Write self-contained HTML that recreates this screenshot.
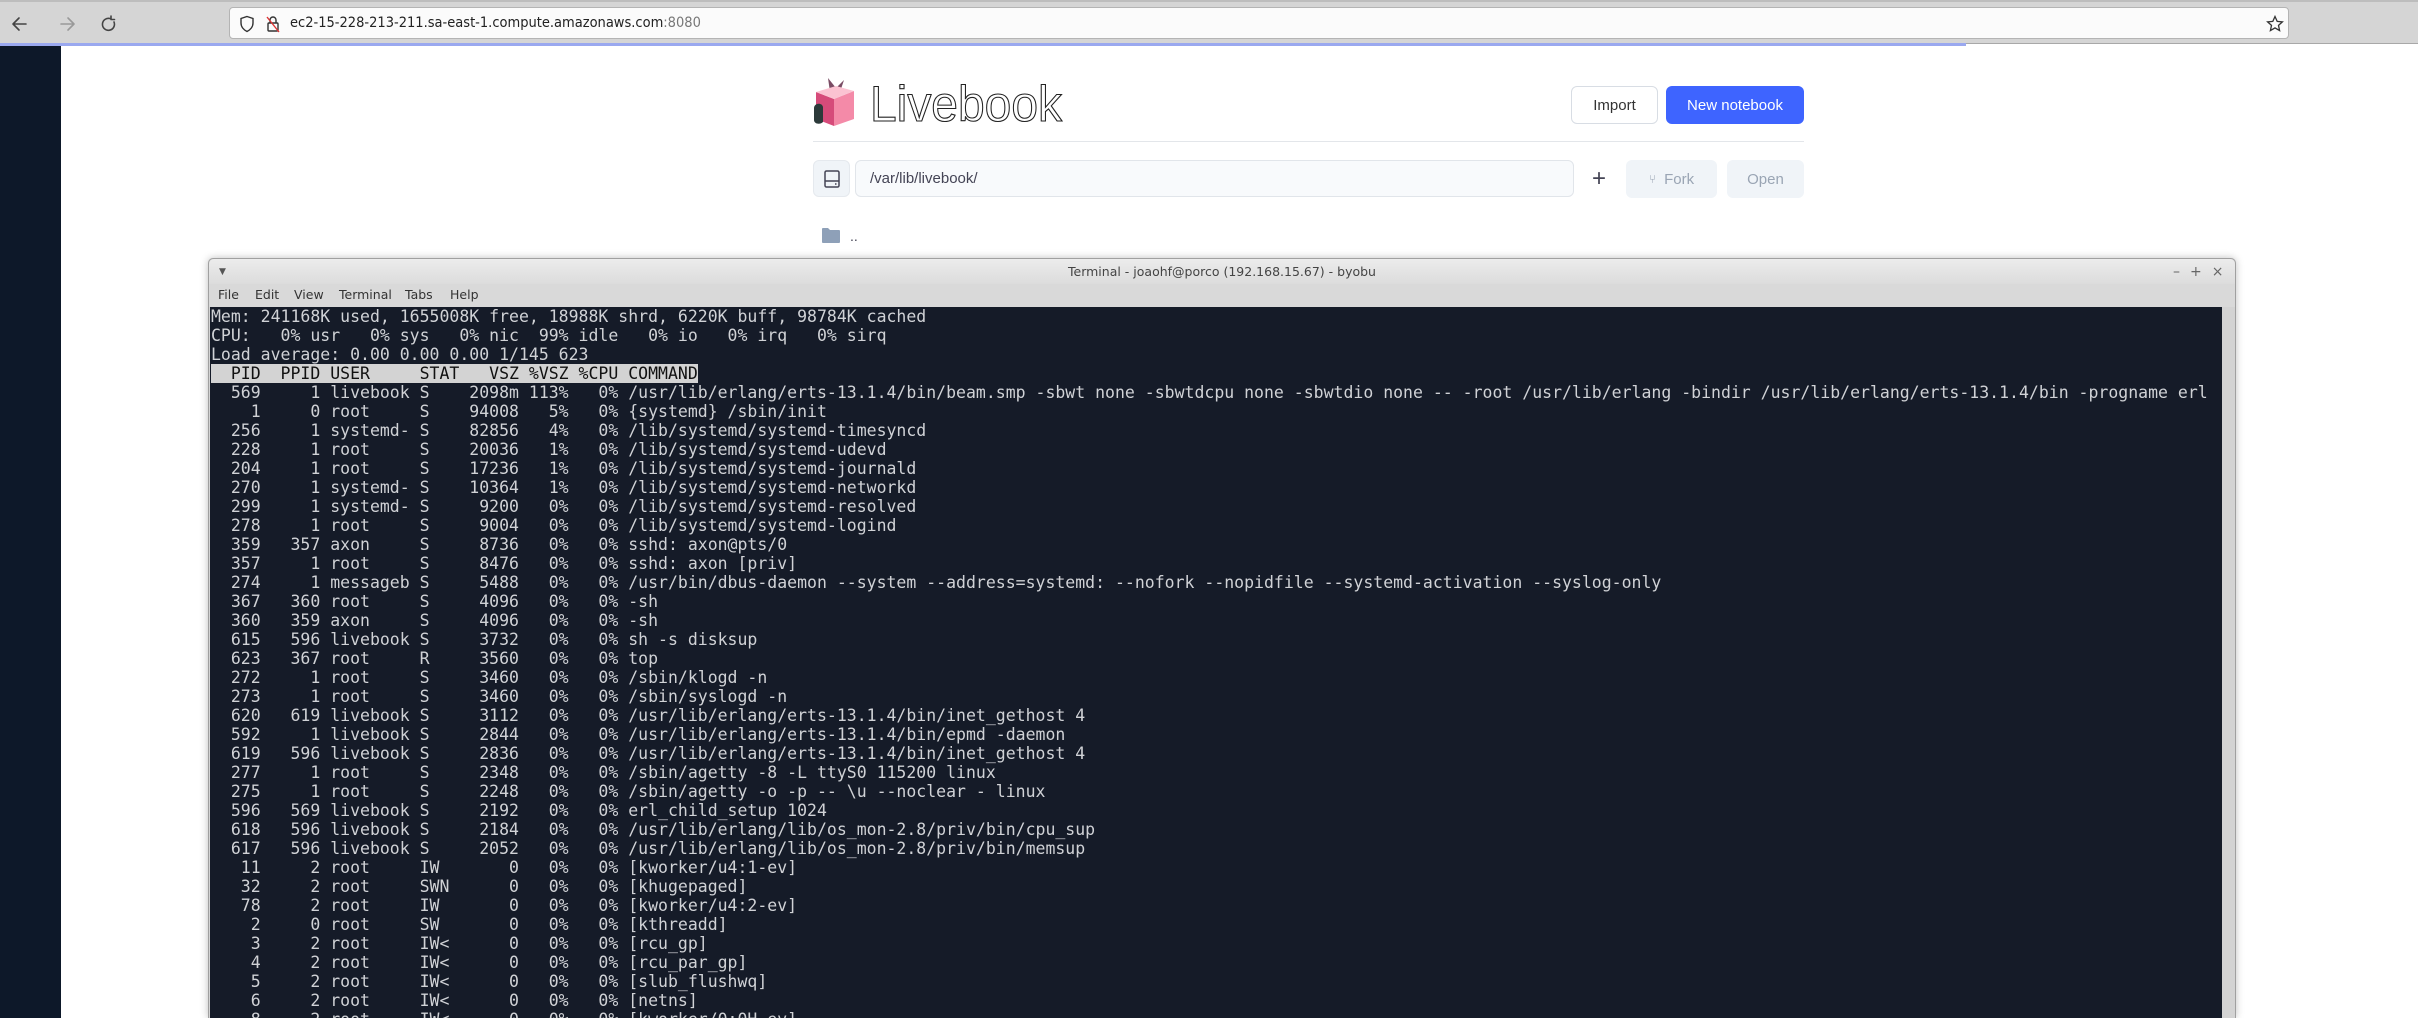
<!DOCTYPE html>
<html style="overflow:hidden;width:2418px;height:1018px"><head><meta charset="utf-8"><style>
*{margin:0;padding:0;box-sizing:border-box}
body{width:2418px;height:1018px;overflow:hidden;background:#fff;font-family:"Liberation Sans","DejaVu Sans",sans-serif;position:relative}
.abs{position:absolute}
#tb{left:0;top:0;width:2418px;height:43px;background:#d5d5d5;border-top:2px solid #bdbdbd}
#url{left:229px;top:7px;width:2060px;height:32px;background:#fbfbfb;border:1px solid #b4b4b4;border-radius:4px}
#url>span{position:absolute;left:60px;top:7px;font-size:14.5px;color:#222;font-family:"DejaVu Sans Condensed","DejaVu Sans",sans-serif}
#prog{left:0;top:43px;width:1966px;height:3px;background:#9aa8ef}
#sep{left:0;top:43px;width:2418px;height:1px;background:#a8a8a8}
#side{left:0;top:46px;width:61px;height:972px;background:#0d1829}
.btn{position:absolute;border-radius:6px;font-size:15px;display:flex;align-items:center;justify-content:center}
#term{left:208px;top:258px;width:2028px;height:760px;background:#d3d3d3;border:1px solid #a0a0a0;border-bottom:none;border-radius:5px 5px 0 0;box-shadow:0 0 8px rgba(0,0,0,.25);overflow:hidden}
#ttl{left:0;top:0;width:100%;height:25px;background:linear-gradient(#ececec,#dcdcdc);border-radius:5px 5px 0 0;font-size:12.5px;color:#444;text-align:center;line-height:26px;font-family:"DejaVu Sans",sans-serif}
#menu{left:0;top:25px;width:100%;height:23px;background:#d9d9d9;font-size:12.5px;color:#333;font-family:"DejaVu Sans",sans-serif}
#menu span{position:absolute;top:3px}
#scr{left:1px;top:48px;width:2012px;height:720px;background:#151b28;overflow:hidden}
pre{font-family:"DejaVu Sans Mono",monospace;font-size:16.5px;line-height:19px;color:#d0d2d6;margin-left:1px;white-space:pre}
.h{background:#d3d3d3;color:#111}
</style></head><body>
<div id="tb" class="abs">
<svg class="abs" style="left:10px;top:12px" width="120" height="20" viewBox="0 0 120 20" fill="none" stroke-width="1.6" stroke-linecap="round" stroke-linejoin="round">
<path d="M16 10H4M9 4L3 10L9 16" stroke="#444"/>
<path d="M51 10H63M58 4L64 10L58 16" stroke="#999"/>
<path d="M100 4.5A6 6 0 1 0 104 8M101 2V5.5H104.5" stroke="#444"/>
</svg>
</div>
<div id="url" class="abs">
<svg class="abs" style="left:10px;top:7px" width="46" height="18" viewBox="0 0 46 18" fill="none" stroke="#333" stroke-width="1.4"><path d="M7 1.5L13 3.5V8C13 12 10 15 7 16.5C4 15 1 12 1 8V3.5Z"/><rect x="28" y="8" width="10" height="8" rx="1"/><path d="M30 8V5a3 3 0 0 1 6 0v3"/><path d="M27 2L39 17" stroke="#d33"/></svg>
<span>ec2-15-228-213-211.sa-east-1.compute.amazonaws.com<span style="color:#777">:8080</span></span>
<svg class="abs" style="left:2036px;top:7px" width="18" height="18" viewBox="0 0 18 18" fill="none" stroke="#333" stroke-width="1.3"><path d="M9 1.5L11.2 6.4L16.4 6.9L12.5 10.4L13.6 15.6L9 12.9L4.4 15.6L5.5 10.4L1.6 6.9L6.8 6.4Z"/></svg>
</div>
<div id="sep" class="abs"></div>
<div id="prog" class="abs"></div>
<div id="side" class="abs"></div>

<svg class="abs" style="left:810px;top:74px" width="50" height="54" viewBox="0 0 50 54">
<path d="M18 4L26 14L34 6L30 18L20 18Z" fill="#7a4c64"/>
<path d="M6 18L24 25L24 52L6 45Z" fill="#d64b7a"/>
<path d="M24 25L44 17L44 45L24 52Z" fill="#f48aa8"/>
<path d="M24 25L6 18L26 12L44 17Z" fill="#fbc3d2"/>
<path d="M4 34C4 29 12 28 13 33L13 48C10 51 4 50 4 46Z" fill="#2c3a3a"/>
</svg>
<svg class="abs" style="left:868px;top:80px" width="200" height="50"><text x="2" y="41" font-family="Liberation Sans" font-size="50" fill="#fff" stroke="#222" stroke-width="1.1" textLength="192" lengthAdjust="spacingAndGlyphs">Livebook</text></svg>
<div class="btn" style="left:1571px;top:86px;width:87px;height:38px;border:1px solid #d8dde4;color:#333">Import</div>
<div class="btn" style="left:1666px;top:86px;width:138px;height:38px;background:#3e64ff;color:#fff">New notebook</div>
<div class="abs" style="left:813px;top:141px;width:991px;height:1px;background:#e3e6ea"></div>
<div class="abs" style="left:813px;top:160px;width:37px;height:37px;background:#f0f4f8;border:1px solid #e5e9ee;border-radius:6px"></div>
<svg class="abs" style="left:822px;top:169px" width="20" height="20" viewBox="0 0 20 20" fill="none" stroke="#445" stroke-width="1.5"><rect x="3" y="2" width="14" height="16" rx="1.5"/><path d="M3 12H17"/><path d="M13 15H14.5"/></svg>
<div class="abs" style="left:855px;top:160px;width:719px;height:37px;background:#f8fafc;border:1px solid #e1e5ea;border-radius:6px;font-size:15px;color:#445;line-height:35px;padding-left:14px">/var/lib/livebook/</div>
<div class="abs" style="left:1592px;top:165px;font-size:24px;color:#445;font-weight:300">+</div>
<div class="btn" style="left:1626px;top:160px;width:91px;height:38px;background:#f0f4f8;color:#9aa5b4"><span style="font-size:12px;margin-right:8px">⑂</span>Fork</div>
<div class="btn" style="left:1727px;top:160px;width:77px;height:38px;background:#f0f4f8;color:#9aa5b4">Open</div>
<svg class="abs" style="left:822px;top:228px" width="18" height="15" viewBox="0 0 18 15"><path d="M0 1C0 .4.4 0 1 0H6L8 2H17C17.6 2 18 2.4 18 3V14C18 14.6 17.6 15 17 15H1C.4 15 0 14.6 0 14Z" fill="#8ea0b8"/></svg>
<div class="abs" style="left:850px;top:228px;font-size:14px;color:#445">..</div>

<div id="term" class="abs">
<div id="ttl" class="abs">Terminal - joaohf@porco (192.168.15.67) - byobu
<span class="abs" style="left:10px;top:0;font-size:9px;color:#555">▼</span>
<span class="abs" style="left:1964px;top:0;font-size:14px;color:#666;letter-spacing:10px">–+×</span></div>
<div id="menu" class="abs"><span style="left:9px">File</span><span style="left:46px">Edit</span><span style="left:85px">View</span><span style="left:130px">Terminal</span><span style="left:196px">Tabs</span><span style="left:241px">Help</span></div>
<div id="scr" class="abs"><pre>Mem: 241168K used, 1655008K free, 18988K shrd, 6220K buff, 98784K cached
CPU:   0% usr   0% sys   0% nic  99% idle   0% io   0% irq   0% sirq
Load average: 0.00 0.00 0.00 1/145 623
<span class="h">  PID  PPID USER     STAT   VSZ %VSZ %CPU COMMAND</span>
  569     1 livebook S    2098m 113%   0% /usr/lib/erlang/erts-13.1.4/bin/beam.smp -sbwt none -sbwtdcpu none -sbwtdio none -- -root /usr/lib/erlang -bindir /usr/lib/erlang/erts-13.1.4/bin -progname erl
    1     0 root     S    94008   5%   0% {systemd} /sbin/init
  256     1 systemd- S    82856   4%   0% /lib/systemd/systemd-timesyncd
  228     1 root     S    20036   1%   0% /lib/systemd/systemd-udevd
  204     1 root     S    17236   1%   0% /lib/systemd/systemd-journald
  270     1 systemd- S    10364   1%   0% /lib/systemd/systemd-networkd
  299     1 systemd- S     9200   0%   0% /lib/systemd/systemd-resolved
  278     1 root     S     9004   0%   0% /lib/systemd/systemd-logind
  359   357 axon     S     8736   0%   0% sshd: axon@pts/0
  357     1 root     S     8476   0%   0% sshd: axon [priv]
  274     1 messageb S     5488   0%   0% /usr/bin/dbus-daemon --system --address=systemd: --nofork --nopidfile --systemd-activation --syslog-only
  367   360 root     S     4096   0%   0% -sh
  360   359 axon     S     4096   0%   0% -sh
  615   596 livebook S     3732   0%   0% sh -s disksup
  623   367 root     R     3560   0%   0% top
  272     1 root     S     3460   0%   0% /sbin/klogd -n
  273     1 root     S     3460   0%   0% /sbin/syslogd -n
  620   619 livebook S     3112   0%   0% /usr/lib/erlang/erts-13.1.4/bin/inet_gethost 4
  592     1 livebook S     2844   0%   0% /usr/lib/erlang/erts-13.1.4/bin/epmd -daemon
  619   596 livebook S     2836   0%   0% /usr/lib/erlang/erts-13.1.4/bin/inet_gethost 4
  277     1 root     S     2348   0%   0% /sbin/agetty -8 -L ttyS0 115200 linux
  275     1 root     S     2248   0%   0% /sbin/agetty -o -p -- \u --noclear - linux
  596   569 livebook S     2192   0%   0% erl_child_setup 1024
  618   596 livebook S     2184   0%   0% /usr/lib/erlang/lib/os_mon-2.8/priv/bin/cpu_sup
  617   596 livebook S     2052   0%   0% /usr/lib/erlang/lib/os_mon-2.8/priv/bin/memsup
   11     2 root     IW       0   0%   0% [kworker/u4:1-ev]
   32     2 root     SWN      0   0%   0% [khugepaged]
   78     2 root     IW       0   0%   0% [kworker/u4:2-ev]
    2     0 root     SW       0   0%   0% [kthreadd]
    3     2 root     IW&lt;      0   0%   0% [rcu_gp]
    4     2 root     IW&lt;      0   0%   0% [rcu_par_gp]
    5     2 root     IW&lt;      0   0%   0% [slub_flushwq]
    6     2 root     IW&lt;      0   0%   0% [netns]
    8     2 root     IW&lt;      0   0%   0% [kworker/0:0H-ev]</pre></div>
</div>
</body></html>
